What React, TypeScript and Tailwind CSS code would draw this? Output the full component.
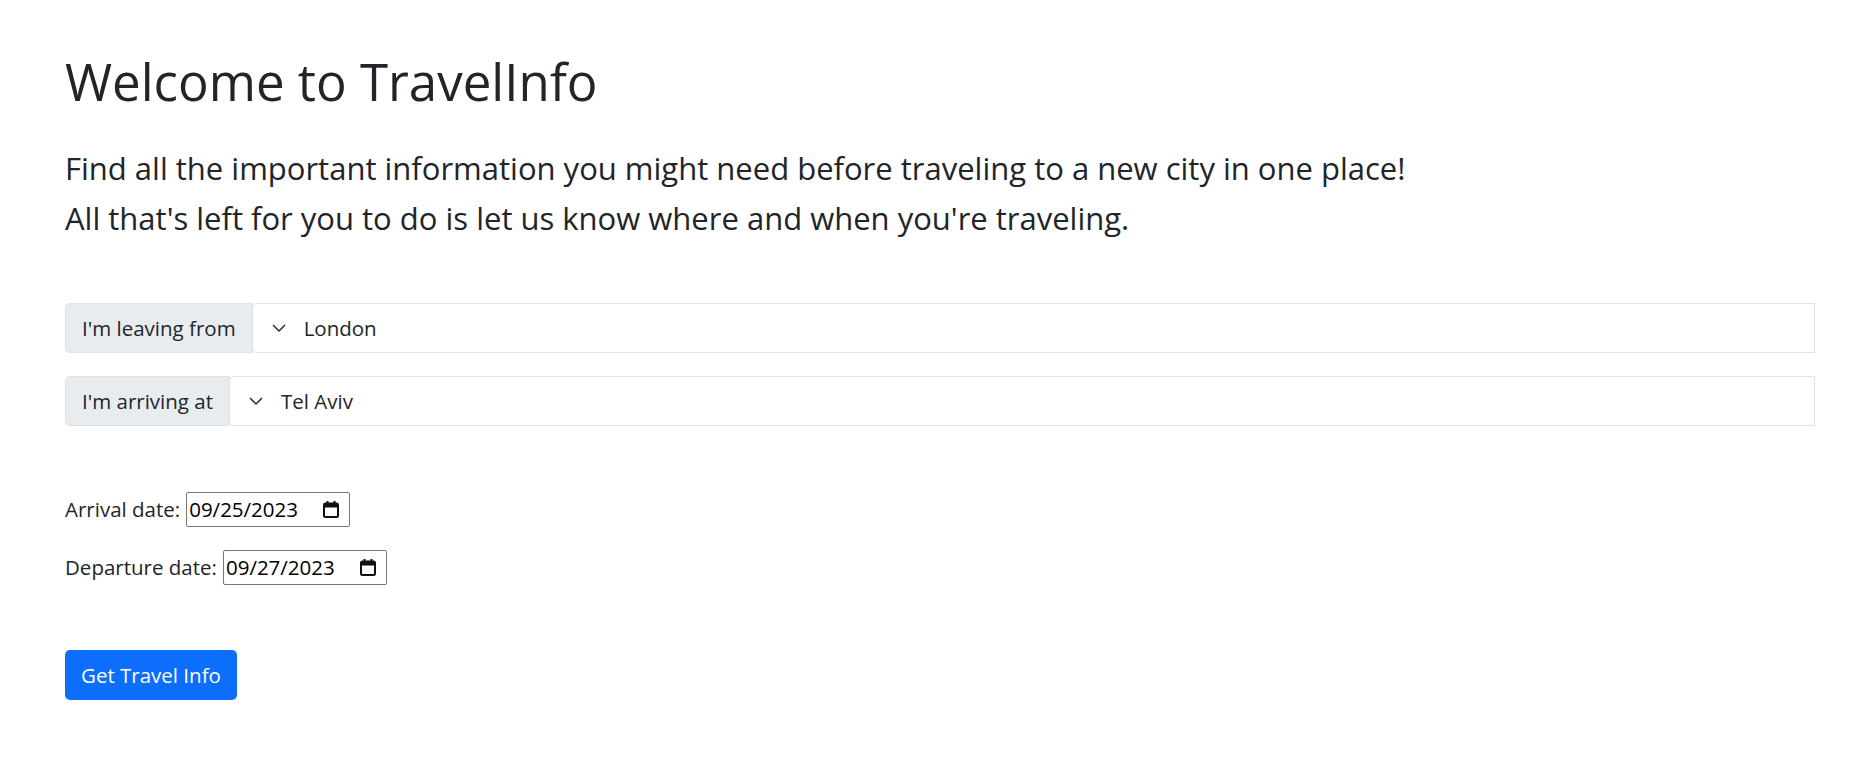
import React from 'react';

const font = { fontFamily: '"Open Sans", "Noto Sans", sans-serif' };

// Input group: grey label + select-like box
function CityPicker({ label, city }: { label: string; city: string }) {
  return (
    <div className="flex h-[50px] w-full">
      <span className="flex items-center whitespace-nowrap rounded-l-[5px] border border-[#dee2e6] bg-[#e9ecef] px-[16px] text-[20.5px] text-[#212529]">
        {label}
      </span>
      <div className="-ml-px flex flex-1 items-center gap-[17px] rounded-l-[5px] border border-[#dee2e6] bg-white pl-[18px] text-[20.5px] text-[#212529]">
        <svg width="16" height="16" viewBox="0 0 16 16" fill="none" stroke="#343a40" strokeWidth="1.7" strokeLinecap="round" strokeLinejoin="round">
          <path d="M2.5 5.5l5.5 5.5 5.5-5.5" />
        </svg>
        <span>{city}</span>
      </div>
    </div>
  );
}

function DateField({ label, value }: { label: string; value: string }) {
  return (
    <div className="flex items-center text-[20.5px] text-[#212529]">
      <label className="mr-[6px]">{label}</label>
      <div className="flex h-[35px] w-[164px] items-center justify-between rounded-[2px] border border-[#767676] bg-white pl-[2px] pr-[10px] text-black">
        <span>{value}</span>
        <svg width="16" height="17" viewBox="0 0 16 17" fill="#111">
          <rect x="1" y="2.5" width="14" height="13.5" rx="1.5" fill="none" stroke="#111" strokeWidth="2" />
          <rect x="1" y="2.5" width="14" height="4" />
          <rect x="3.5" y="0" width="2" height="3.5" />
          <rect x="10.5" y="0" width="2" height="3.5" />
        </svg>
      </div>
    </div>
  );
}

export default function App() {
  return (
    <div className="min-h-screen bg-white pl-[65px] pr-[41px] pt-[51px]" style={font}>
      <h1 className="text-[51px] font-normal leading-[1.2] text-[#212529]">Welcome to TravelInfo</h1>

      {/* intro */}
      <div className="mt-[31px] text-[31px] leading-[50px] text-[#212529]">
        <p>Find all the important information you might need before traveling to a new city in one place!</p>
        <p>All that's left for you to do is let us know where and when you're traveling.</p>
      </div>

      <div className="mt-[60px] flex flex-col gap-[23px]">
        <CityPicker label="I'm leaving from" city="London" />
        <CityPicker label="I'm arriving at" city="Tel Aviv" />
      </div>

      <div className="mt-[66px] flex flex-col gap-[23px]">
        <DateField label="Arrival date:" value="09/25/2023" />
        <DateField label="Departure date:" value="09/27/2023" />
      </div>

      <button className="mt-[65px] h-[50px] rounded-[5px] bg-[#0d6efd] px-[16px] text-[20.5px] text-white">
        Get Travel Info
      </button>
    </div>
  );
}
